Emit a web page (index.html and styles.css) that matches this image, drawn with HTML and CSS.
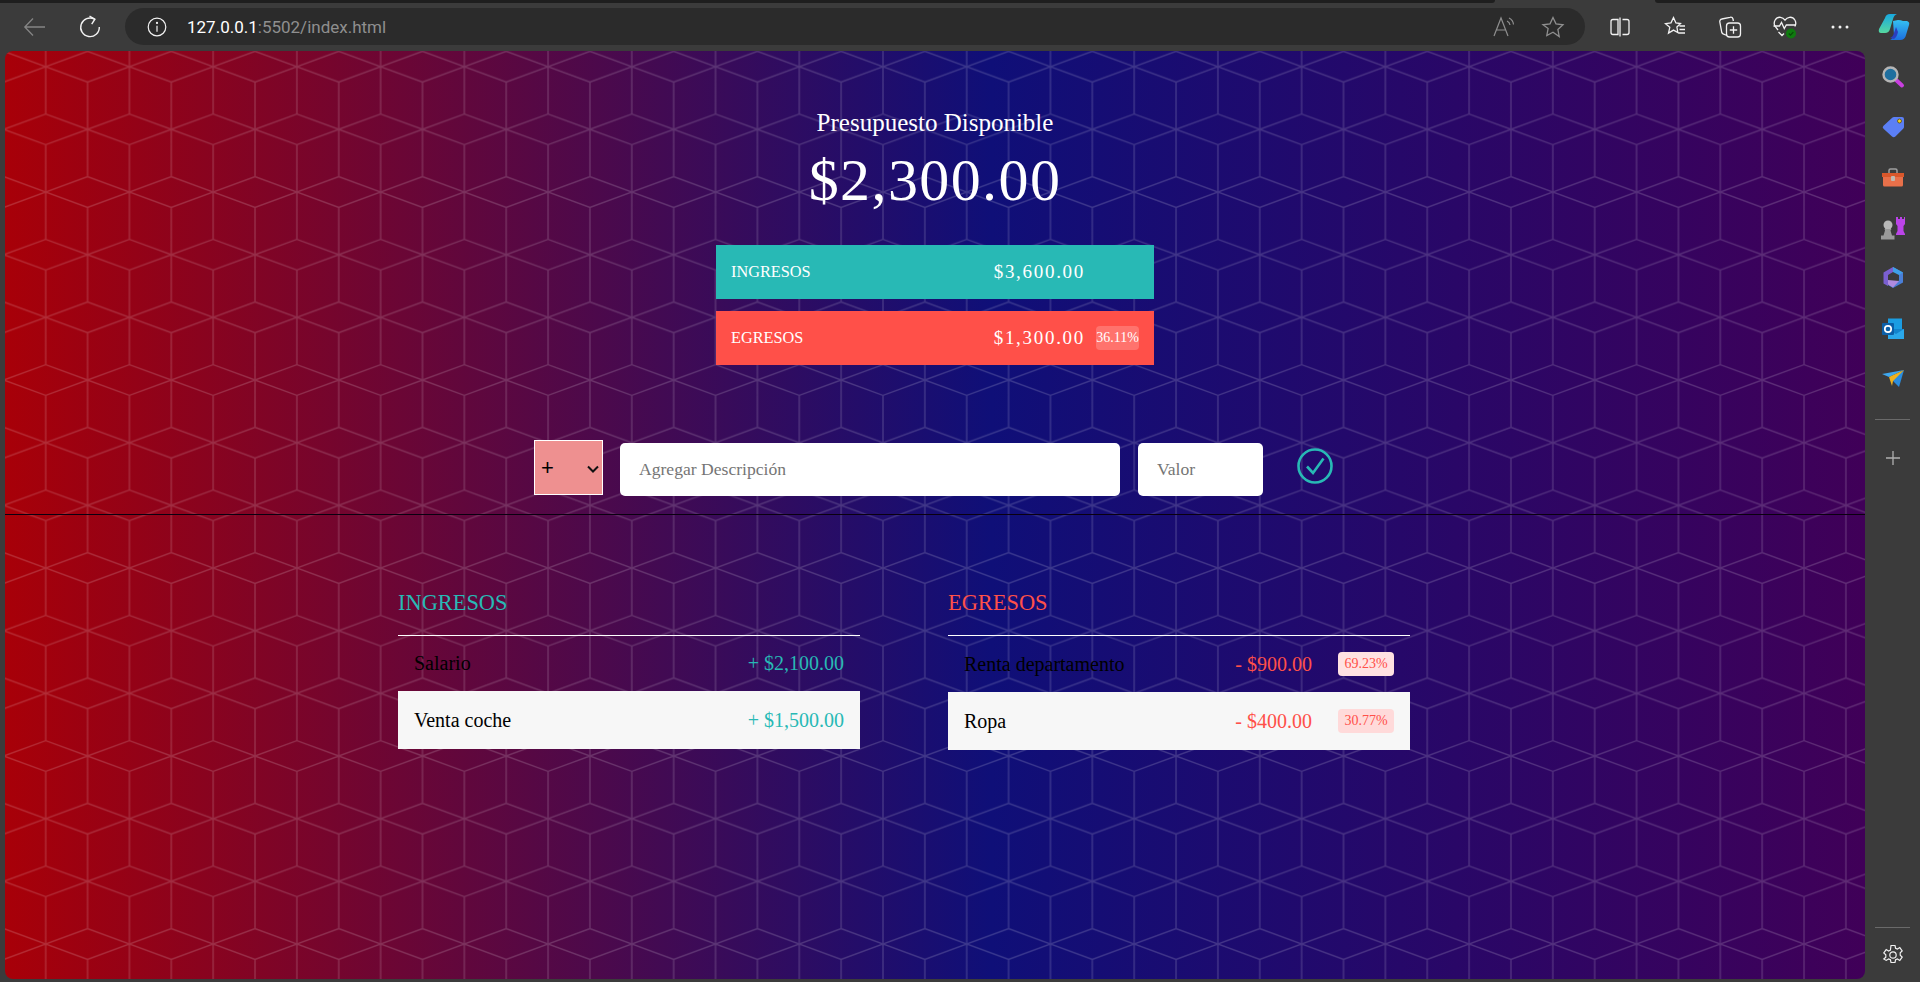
FILE: index.html
```html
<!DOCTYPE html>
<html lang="es">
<head>
<meta charset="utf-8">
<title>Presupuesto</title>
<link rel="stylesheet" href="styles.css">
</head>
<body>
<div class="browser">
  <div class="tabstrip"><span class="tabstrip__dark"></span><span class="tabstrip__active"></span><span class="tabstrip__dark tabstrip__dark--right"></span></div>
  <header class="toolbar">
    <span class="nav nav--back"><svg width="24" height="24" viewBox="0 0 24 24" fill="none" stroke="#858585" stroke-width="1.3"><path d="M22 12H2M10 3.5 1.8 12l8.2 8.5"/></svg></span>
    <span class="nav nav--reload"><svg width="24" height="24" viewBox="0 0 24 24" fill="none" stroke="#f2f2f2" stroke-width="1.4"><path d="M16.5 4.2A9.3 9.3 0 1 0 21.3 12"/><path d="M11.5 1.2l5.4 3-3.2 5"/></svg></span>
    <div class="address">
      <svg class="address__info" width="20" height="20" viewBox="0 0 20 20" fill="none" stroke="#f2f2f2" stroke-width="1.2"><circle cx="10" cy="10" r="8.8"/><path d="M10 8.7v6"/><circle cx="10" cy="5.9" r=".5" fill="#f2f2f2"/></svg>
      <span class="address__url"><span class="address__host">127.0.0.1</span>:5502/index.html</span>
      <svg class="address__icon" width="24" height="24" viewBox="0 0 24 24" fill="none" stroke="#8f8f8f" stroke-width="1.2"><path d="M2 21 9 3l7 18M4.5 15h9"/><path d="M15 6a5 5 0 0 1 3 4M17 3a8 8 0 0 1 4.500 6.500"/></svg>
      <svg class="address__icon" width="24" height="24" viewBox="0 0 24 24" fill="none" stroke="#8f8f8f" stroke-width="1.3"><path d="M12 2.500l3 6.400 7 .9-5.100 4.800 1.300 6.900L12 17.200l-6.200 3.300 1.300-6.900L2 9.800l7-.9z"/></svg>
    </div>
    <div class="tools">
      <span class="tool"><svg width="24" height="24" viewBox="0 0 24 24" fill="none" stroke="#f2f2f2" stroke-width="1.3"><path d="M10 4.500H5A2 2 0 0 0 3 6.500v11a2 2 0 0 0 2 2h5zM12 2.500v19M14.500 4.500H19a2 2 0 0 1 2 2v11a2 2 0 0 1-2 2h-4.500"/></svg></span>
      <span class="tool"><svg width="24" height="24" viewBox="0 0 24 24" fill="none" stroke="#f2f2f2" stroke-width="1.3"><path d="M10.500 2.500l2.400 5.400 4.600.6-3.600 3.500.9 5.500-4.300-2.400-5 3 1.300-5.800L2.500 8.700l5.500-.9zM16.500 11H22M16.500 14.500H22M15 18H22"/></svg></span>
      <span class="tool"><svg width="24" height="24" viewBox="0 0 24 24" fill="none" stroke="#f2f2f2" stroke-width="1.3"><path d="M9 20.500 5 18.800a2 2 0 0 1-1.200-1.300L1.800 7a2.500 2.500 0 0 1 2-3L12 2.300A2.500 2.500 0 0 1 15 4l.4 2"/><rect x="8.500" y="8" width="14" height="14" rx="3"/><path d="M15.500 11.300v7.400M11.800 15h7.400"/></svg></span>
      <span class="tool"><svg width="26" height="24" viewBox="0 0 26 24" fill="none" stroke="#f2f2f2" stroke-width="1.3"><path d="M6 15 3.200 11.500C.500 7 4 1.800 8.500 2.300c2 .2 3.400 1.200 4.500 2.800 1.100-1.600 2.500-2.600 4.500-2.800 4.500-.5 8 4.700 5.300 9.200M6.500 17l3.500 3.500 2-2"/><path d="M1.500 11H7.500l2-3.500 2.800 6 2-3.500H24"/><circle cx="19" cy="18.500" r="5" fill="#0f7b0f" stroke="none"/><path d="M16.800 18.500l1.700 1.600 2.800-3" stroke="#0a4a0a"/></svg></span>
      <span class="tool"><svg width="18" height="4" viewBox="0 0 18 4" fill="#f2f2f2"><circle cx="2" cy="2" r="1.500"/><circle cx="9" cy="2" r="1.500"/><circle cx="16" cy="2" r="1.500"/></svg></span>
      <span class="tool tool--last"><svg width="32" height="28" viewBox="0 0 32 28"><defs><linearGradient id="copA" x1="0" y1="0" x2="0" y2="1"><stop offset="0" stop-color="#18a8e0"/><stop offset="1" stop-color="#56d8a0"/></linearGradient><linearGradient id="copB" x1="0" y1="0" x2="0" y2="1"><stop offset="0" stop-color="#35c1f1"/><stop offset="1" stop-color="#1c6fe0"/></linearGradient></defs><path d="M7 5Q8 1 12 1h7q-3 1-4 5l-3 10q-1 4-5 4H3Q0 20 1 16z" fill="url(#copA)"/><path d="M15 8l5-1q3 0 5 1h4q3 1 2 4l-3 10q-1 5-6 5H12q3-1 4-5z" fill="url(#copB)"/><path d="M12 25q3-1 4-5l2-6 2 5q-1 5-4 7z" fill="#2a3fc0"/></svg></span>
    </div>
  </header>
  <div class="workspace">
    <main class="page">
      <svg class="page__pattern" width="100%" height="100%"><defs><pattern id="cubes" x="40.7" y="15.7" width="83.73" height="125.33" patternUnits="userSpaceOnUse"><path d="M0 0 41.87 15.33 83.73 0M0 125.33 41.87 110 83.73 125.33M0 0V47.33L41.87 62.67 83.73 47.33V0M0 125.33V78L41.87 62.67 83.73 78V125.33M41.87 15.33V110" fill="none" stroke="#fff" stroke-opacity=".17" stroke-width="1.400"/></pattern></defs><rect width="100%" height="100%" fill="url(#cubes)"/></svg>
      <div class="page__content">
        <section class="summary">
          <h1 class="summary__title">Presupuesto Disponible</h1>
          <div class="summary__amount">$2,300.00</div>
          <div class="bar bar--income">
            <span class="bar__label">INGRESOS</span>
            <span class="bar__value">$3,600.00</span>
            <span class="bar__pct bar__pct--empty"></span>
          </div>
          <div class="bar bar--expense">
            <span class="bar__label">EGRESOS</span>
            <span class="bar__value">$1,300.00</span>
            <span class="bar__pct">36.11%</span>
          </div>
        </section>
        <form class="entry">
          <select class="entry__type"><option>+</option><option>-</option></select>
          <input class="entry__desc" type="text" placeholder="Agregar Descripción">
          <input class="entry__value" type="text" placeholder="Valor">
          <button class="entry__add" type="button"><svg width="36" height="36" viewBox="0 0 36 36" fill="none" stroke="#28b9b5" stroke-width="2.600"><circle cx="18" cy="18" r="16.500"/><path d="M10 18.500l6 6.500L26.500 10.500"/></svg></button>
        </form>
        <section class="lists">
          <div class="column">
            <h2 class="column__title column__title--income">INGRESOS</h2>
            <div class="row row--first-income"><span class="row__name">Salario</span><span class="row__value row__value--income">+ $2,100.00</span></div>
            <div class="row row--even"><span class="row__name">Venta coche</span><span class="row__value row__value--income">+ $1,500.00</span></div>
          </div>
          <div class="column">
            <h2 class="column__title column__title--expense">EGRESOS</h2>
            <div class="row row--first-expense"><span class="row__name">Renta departamento</span><span class="row__value row__value--expense">- $900.00</span><span class="row__pct row__pct--light">69.23%</span></div>
            <div class="row row--even"><span class="row__name">Ropa</span><span class="row__value row__value--expense">- $400.00</span><span class="row__pct">30.77%</span></div>
          </div>
        </section>
      </div>
    </main>
    <aside class="sidebar">
      <span class="side"><svg width="24" height="24" viewBox="0 0 24 24"><path d="M14 14l7 6.500" stroke="#c93fe0" stroke-width="4" stroke-linecap="round"/><circle cx="9.500" cy="9.500" r="7" fill="#1f6f9f" stroke="#b5b5b5" stroke-width="2.400"/></svg></span>
      <span class="side"><svg width="24" height="24" viewBox="0 0 24 24"><path d="M13 2h8a2 2 0 0 1 2 2v8a2 2 0 0 1-.6 1.400l-8 8a2.500 2.500 0 0 1-3.400 0l-8.500-7.600a2 2 0 0 1 0-3L11.500 2.600A2 2 0 0 1 13 2z" fill="#5b7ff5"/><circle cx="18.500" cy="6" r="2" fill="#f2d21e" stroke="#5a4a10" stroke-width=".8"/></svg></span>
      <span class="side"><svg width="24" height="24" viewBox="0 0 24 24"><path d="M8 7V4.500Q8 3 9.500 3h5Q16 3 16 4.500V7" fill="none" stroke="#a0a0a0" stroke-width="1.500"/><path d="M1 7h22v4H1z" fill="#d9572b"/><path d="M2 11h20v8a1.500 1.500 0 0 1-1.500 1.500h-17A1.500 1.500 0 0 1 2 19z" fill="#e8704a"/><rect x="10" y="10" width="4" height="5" rx="1" fill="#c0b8b0"/></svg></span>
      <span class="side"><svg width="26" height="26" viewBox="0 0 26 26"><path d="M16 2h2v2h2V2h2v2h2V2h1v7l-1.500 2v5l1.500 3v1h-9v-1l1.500-3v-5L16 9z" fill="#bb44e8"/><circle cx="8" cy="10" r="4.500" fill="#b8b8b8"/><path d="M4.500 14h7l-1 1.500 1.500 5h2.500v4H1v-4h2.500l1.500-5z" fill="#9a9a9a"/></svg></span>
      <span class="side"><svg width="24" height="24" viewBox="0 0 24 24"><path d="M12 1 22 6.500v10L12 22l-5-3 3-2 2 1 6-3.500V8L12 5z" fill="#4a7fd8"/><path d="M12 1 2.500 6.500v11L7 20V9l5-3z" fill="#7a5fd0"/><path d="M7 14l11 1-6 6.500-5-3z" fill="#b08be0"/><path d="M12 1l10 5.500L18 9l-6-3z" fill="#3fa0e8"/></svg></span>
      <span class="side"><svg width="24" height="24" viewBox="0 0 24 24"><rect x="7" y="1.500" width="14" height="11" fill="#1b9de2"/><path d="M7 12h16v10H7z" fill="#1384cc"/><path d="M7 12l8 5 8-5v10H7z" fill="#2ba8ea"/><rect x="1" y="6" width="12" height="12" rx="1" fill="#0b5fa8"/><circle cx="7" cy="12" r="3.200" fill="none" stroke="#fff" stroke-width="1.700"/></svg></span>
      <span class="side"><svg width="24" height="22" viewBox="0 0 24 22"><path d="M1 6 23 2 8 9z" fill="#3fa8ee"/><path d="M23 2 18 19 11 12z" fill="#2a8ddf"/><path d="M23 2 8 9l3 9 1-5z" fill="#f0b21e"/></svg></span>
      <hr class="sidebar__rule sidebar__rule--top">
      <span class="side side--plus"><svg width="18" height="18" viewBox="0 0 18 18" stroke="#b0b0b0" stroke-width="1.300"><path d="M9 2v14M2 9h14"/></svg></span>
      <hr class="sidebar__rule sidebar__rule--bottom">
      <span class="side side--gear"><svg width="22" height="22" viewBox="0 0 22 22" fill="none" stroke="#f0f0f0" stroke-width="1.200"><circle cx="11" cy="11" r="3.200"/><path d="M9 1.500h4l.6 2.700 1.800.8 2.400-1.400 2.400 3.400-2 1.800v2.400l2 1.800-2.400 3.400-2.400-1.400-1.800.8-.6 2.700H9l-.6-2.700-1.800-.8-2.400 1.400L1.800 15l2-1.800v-2.400l-2-1.800 2.400-3.400L6.600 7l1.800-.8z"/></svg></span>
    </aside>
  </div>
</div>
</body>
</html>
```
FILE: styles.css
```css
* { box-sizing: border-box; }
html, body { margin: 0; height: 100%; overflow: hidden; }
body { background: #3b3b3b; font-family: "Liberation Serif", "Times New Roman", serif; }

.browser { height: 982px; display: flex; flex-direction: column; }

.tabstrip { height: 3px; display: flex; }
.tabstrip__dark { width: 1495px; background: #1e1e1e; border-bottom-right-radius: 4px; }
.tabstrip__active { width: 160px; }
.tabstrip__dark--right { flex: 1; width: auto; border-bottom-right-radius: 0; border-bottom-left-radius: 4px; }

.toolbar { height: 48px; display: flex; align-items: flex-start; padding-top: 5px; padding-left: 20px; }
.nav { width: 30px; height: 37px; display: flex; align-items: center; justify-content: center; }
.nav--reload { margin-left: 25px; }
.address { flex: 1; margin-left: 20px; margin-right: 7px; height: 37px; border-radius: 19px; background: #2b2b2b; display: flex; align-items: center; padding: 0 20px 0 22px; gap: 25px; font-family: Roboto, sans-serif; font-size: 17px; color: #8f8f8f; }
.address__info { margin-right: -5px; }
.address__url { flex: 1; }
.address__host { color: #fff; }
.tools { display: flex; height: 37px; }
.tool { width: 55px; display: flex; align-items: center; justify-content: center; }
.tool--last { width: 53px; }

.workspace { flex: 1; display: flex; min-height: 0; }
.page { flex: 1; position: relative; margin: 0 0 3px 5px; border-radius: 8px; overflow: hidden; background: linear-gradient(to right, #a80008 0, #0f0f78 53%, #400058 100%); }
.page__pattern { position: absolute; inset: 0; }
.page__content { position: relative; }

.sidebar { width: 55px; display: flex; flex-direction: column; align-items: center; padding: 1px 0 14px; }
.side { height: 50.33px; flex: none; display: flex; align-items: center; justify-content: center; }
.side--plus { height: 40px; margin-top: 18px; }
.side--gear { height: 26px; margin-top: 14px; }
.sidebar__rule { width: 35px; height: 1px; border: 0; margin: 0; flex: none; background: #6a6a6a; }
.sidebar__rule--top { margin-top: 15px; }
.sidebar__rule--bottom { margin-top: auto; }

.summary { padding-top: 57px; display: flex; flex-direction: column; align-items: center; color: #fff; }
.summary__title { margin: 0; font-size: 25px; font-weight: 400; line-height: 30px; }
.summary__amount { margin-top: 7px; font-size: 60px; line-height: 70px; letter-spacing: 1.4px; }

.bar { width: 438px; height: 54px; display: flex; align-items: center; padding: 0 15px; }
.bar--income { margin-top: 30px; background: #28b9b5; }
.bar--expense { margin-top: 12px; background: #ff5049; }
.bar__label { flex: 1; font-size: 16.3px; }
.bar__value { font-size: 19px; letter-spacing: 1.7px; }
.bar__pct { width: 43px; height: 24px; margin-left: 11px; border-radius: 4px; background: rgba(255, 255, 255, .2); font-size: 14px; line-height: 24px; text-align: center; }
.bar__pct--empty { background: none; }

.entry { margin-top: 75px; height: 75px; padding-bottom: 18px; border-bottom: 1px solid #0a0010; display: flex; align-items: flex-start; justify-content: center; padding-right: 3px; }
.entry__type { width: 69px; height: 55px; border: 1px solid #fff; appearance: none; background: #ee9090 url("data:image/svg+xml,%3Csvg xmlns='http://www.w3.org/2000/svg' width='12' height='8'%3E%3Cpath d='M1 1.500l5 5 5-5' fill='none' stroke='%23111' stroke-width='2'/%3E%3C/svg%3E") no-repeat 52px 24px; color: #000; font-family: "Liberation Sans", sans-serif; font-size: 22px; padding-left: 6px; border-radius: 0; }
.entry__desc, .entry__value { height: 53px; margin-top: 3px; border: 0; border-radius: 5px; background: #fff; padding: 0 19px; font-family: "Liberation Serif", serif; font-size: 17.6px; }
.entry__desc { width: 500px; margin-left: 17px; }
.entry__value { width: 125px; margin-left: 18px; }
.entry__desc::placeholder, .entry__value::placeholder { color: #757575; }
.entry__add { width: 36px; height: 36px; margin: 8px 0 0 34px; padding: 0; border: 0; background: none; }

.lists { margin-top: 73px; margin-left: 393px; display: flex; gap: 88px; }
.column { width: 462px; }
.column__title { margin: 0; height: 48px; padding-bottom: 17px; border-bottom: 1px solid #fff; font-size: 22.4px; font-weight: 400; line-height: 30px; }
.column__title--income { color: #28b9b5; }
.column__title--expense { color: #ff5049; }

.row { display: flex; align-items: center; padding: 0 16px; font-size: 20px; color: #000; }
.row--first-income { height: 55px; }
.row--first-expense { height: 56px; }
.row--even { height: 58px; background: #f7f7f7; }
.row__name { flex: 1; }
.row__value--income { color: #28b9b5; }
.row__value--expense { color: #ff5049; }
.row__pct { width: 56px; height: 24px; margin-left: 26px; border-radius: 4px; background: #ffdada; color: #ff5049; font-size: 14px; line-height: 24px; text-align: center; }
.row__pct--light { background: #ffe2e2; }
```
